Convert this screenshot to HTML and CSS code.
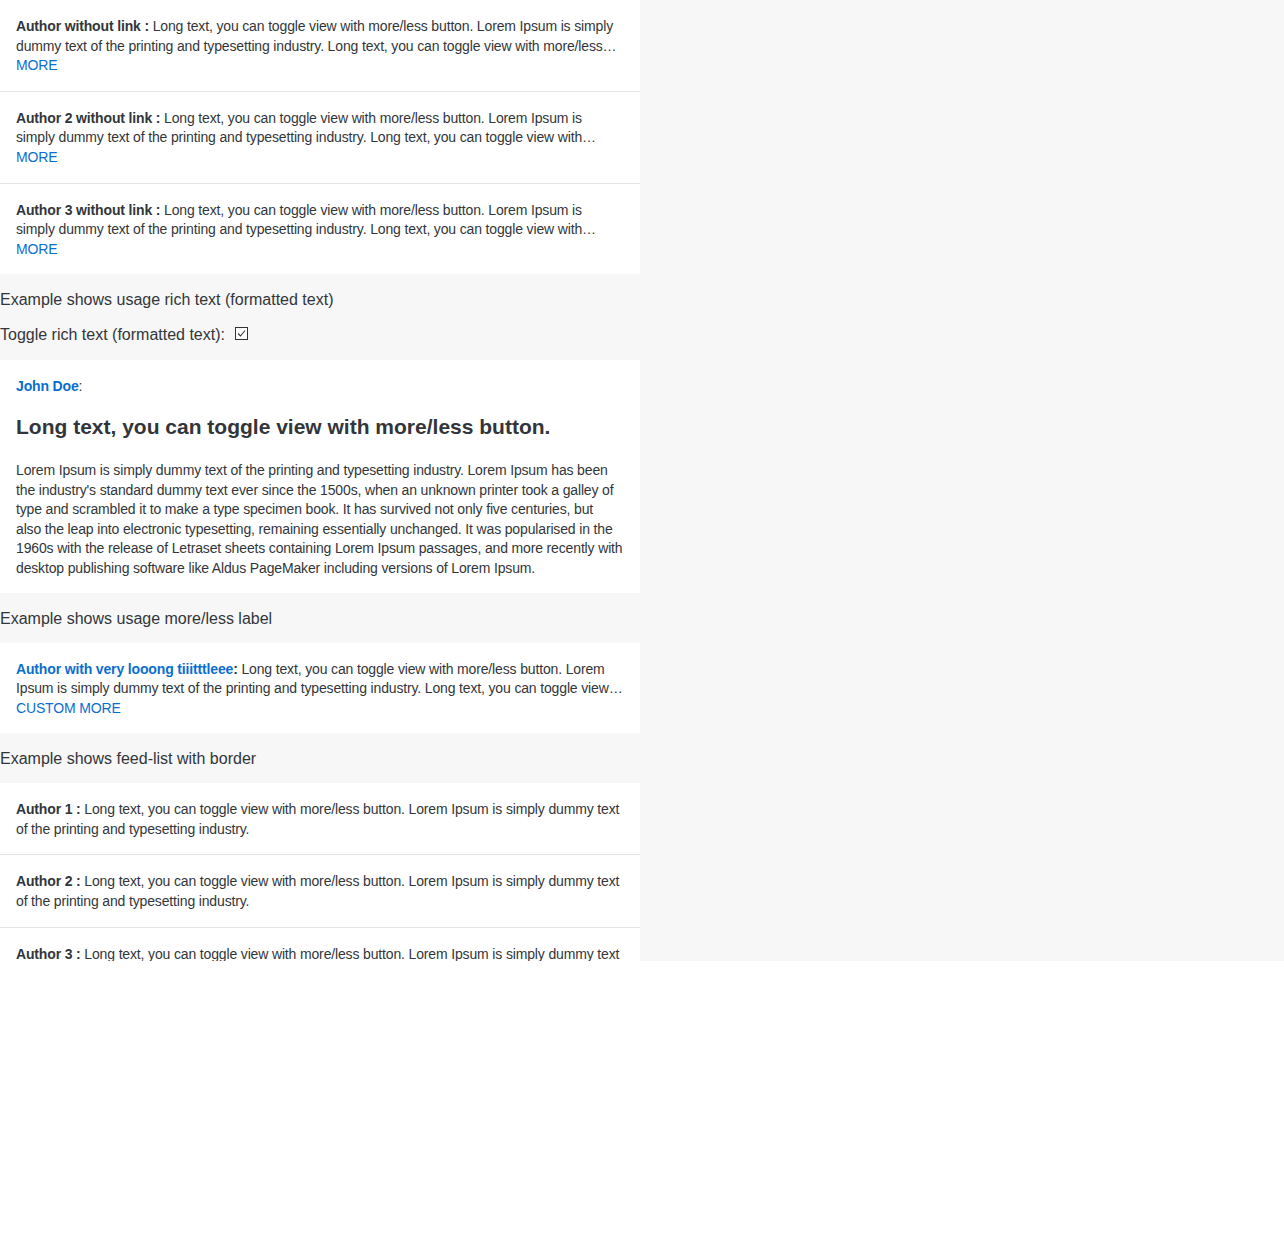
FILE: index.html
```html
<!DOCTYPE html>
<html lang="en">
<head>
<meta charset="utf-8">
<title>Feed list</title>
<link rel="stylesheet" href="styles.css">
</head>
<body>
<div class="page">
  <div class="column">
    <ul class="feed">
      <li class="item">
        <p class="clamp"><b class="author">Author without link :</b> Long text, you can toggle view with more/less button. Lorem Ipsum is simply dummy text of the printing and typesetting industry. Long text, you can toggle view with more/less button. Lorem Ipsum is simply dummy text of the printing and typesetting industry.</p>
        <a class="more">MORE</a>
      </li>
      <li class="item">
        <p class="clamp"><b class="author">Author 2 without link :</b> Long text, you can toggle view with more/less button. Lorem Ipsum is simply dummy text of the printing and typesetting industry. Long text, you can toggle view with more/less button. Lorem Ipsum is simply dummy text of the printing and typesetting industry.</p>
        <a class="more">MORE</a>
      </li>
      <li class="item last">
        <p class="clamp"><b class="author">Author 3 without link :</b> Long text, you can toggle view with more/less button. Lorem Ipsum is simply dummy text of the printing and typesetting industry. Long text, you can toggle view with more/less button. Lorem Ipsum is simply dummy text of the printing and typesetting industry.</p>
        <a class="more">MORE</a>
      </li>
    </ul>

    <p class="title">Example shows usage rich text (formatted text)</p>
    <p class="toggle">Toggle rich text (formatted text): <span class="check"><svg width="13" height="13" viewBox="0 0 13 13"><rect x="0.5" y="0.5" width="12" height="12" fill="#fff" stroke="#333" stroke-width="1"/><path d="M3 6.5 L5.5 9 L10 3.5" fill="none" stroke="#333" stroke-width="1.1"/></svg></span></p>

    <div class="card rich">
      <p class="line"><a class="link">John Doe</a>:</p>
      <h2 class="heading">Long text, you can toggle view with more/less button.</h2>
      <p class="body">Lorem Ipsum is simply dummy text of the printing and typesetting industry. Lorem Ipsum has been the industry's standard dummy text ever since the 1500s, when an unknown printer took a galley of type and scrambled it to make a type specimen book. It has survived not only five centuries, but also&nbsp;the leap into electronic typesetting, remaining essentially unchanged. It was popularised in the 1960s with the release of Letraset sheets containing Lorem Ipsum passages, and more recently with desktop publishing software like Aldus PageMaker including versions of Lorem Ipsum.</p>
    </div>

    <p class="title">Example shows usage more/less label</p>
    <ul class="feed">
      <li class="item last">
        <p class="clamp"><a class="link">Author with very looong tiiitttleee</a><b class="colon">:</b> Long text, you can toggle view with more/less button. Lorem Ipsum is simply dummy text of the printing and typesetting industry. Long text, you can toggle view with more/less button. Lorem Ipsum is simply dummy text of the printing and typesetting industry.</p>
        <a class="more">CUSTOM MORE</a>
      </li>
    </ul>

    <p class="title">Example shows feed-list with border</p>
    <ul class="feed">
      <li class="item">
        <p><b class="author">Author 1 :</b> Long text, you can toggle view with more/less button. Lorem Ipsum is simply dummy text of the printing and typesetting industry.</p>
      </li>
      <li class="item">
        <p><b class="author">Author 2 :</b> Long text, you can toggle view with more/less button. Lorem Ipsum is simply dummy text of the printing and typesetting industry.</p>
      </li>
      <li class="item last">
        <p><b class="author">Author 3 :</b> Long text, you can toggle view with more/less button. Lorem Ipsum is simply dummy text of the printing and typesetting industry.</p>
      </li>
    </ul>
  </div>
</div>
</body>
</html>
```
FILE: styles.css
```css
html, body {
  margin: 0;
  padding: 0;
  background: #fff;
}
.page {
  height: 961px;
  overflow: hidden;
  background: #f7f7f7;
  font-family: "Liberation Sans", Arial, sans-serif;
  color: #32363a;
}
.column {
  width: 640px;
}
.feed {
  list-style: none;
  margin: 0;
  padding: 0;
  background: #fff;
}
.item {
  padding: 17px 16px 15px;
  border-bottom: 1px solid #e5e5e5;
  font-size: 14px;
  line-height: 19.6px;
  letter-spacing: -0.15px;
}
.item.last {
  border-bottom: none;
}
.item p {
  margin: 0;
}
.clamp {
  display: -webkit-box;
  -webkit-box-orient: vertical;
  -webkit-line-clamp: 2;
  overflow: hidden;
}
.author, .colon {
  font-weight: 700;
}
.more {
  display: block;
  color: #0a6ed1;
  cursor: pointer;
}
.link {
  color: #0a6ed1;
  font-weight: 700;
  cursor: pointer;
}
.title {
  margin: 0;
  padding: 16px 0 14px;
  font-size: 16px;
  line-height: 20px;
}
.toggle {
  margin: 1px 0 0;
  padding: 0 0 15px;
  font-size: 16px;
  line-height: 20px;
  display: flex;
  align-items: center;
  gap: 10px;
}
.check {
  display: inline-flex;
  margin-top: -3px;
}
.card {
  background: #fff;
  padding: 17px 16px 14px;
  font-size: 14px;
  line-height: 19.6px;
  letter-spacing: -0.15px;
}
.card p {
  margin: 0;
}
.heading {
  margin: 18px 0 22px;
  font-size: 21px;
  line-height: 24px;
  font-weight: 700;
  letter-spacing: 0;
}
```
